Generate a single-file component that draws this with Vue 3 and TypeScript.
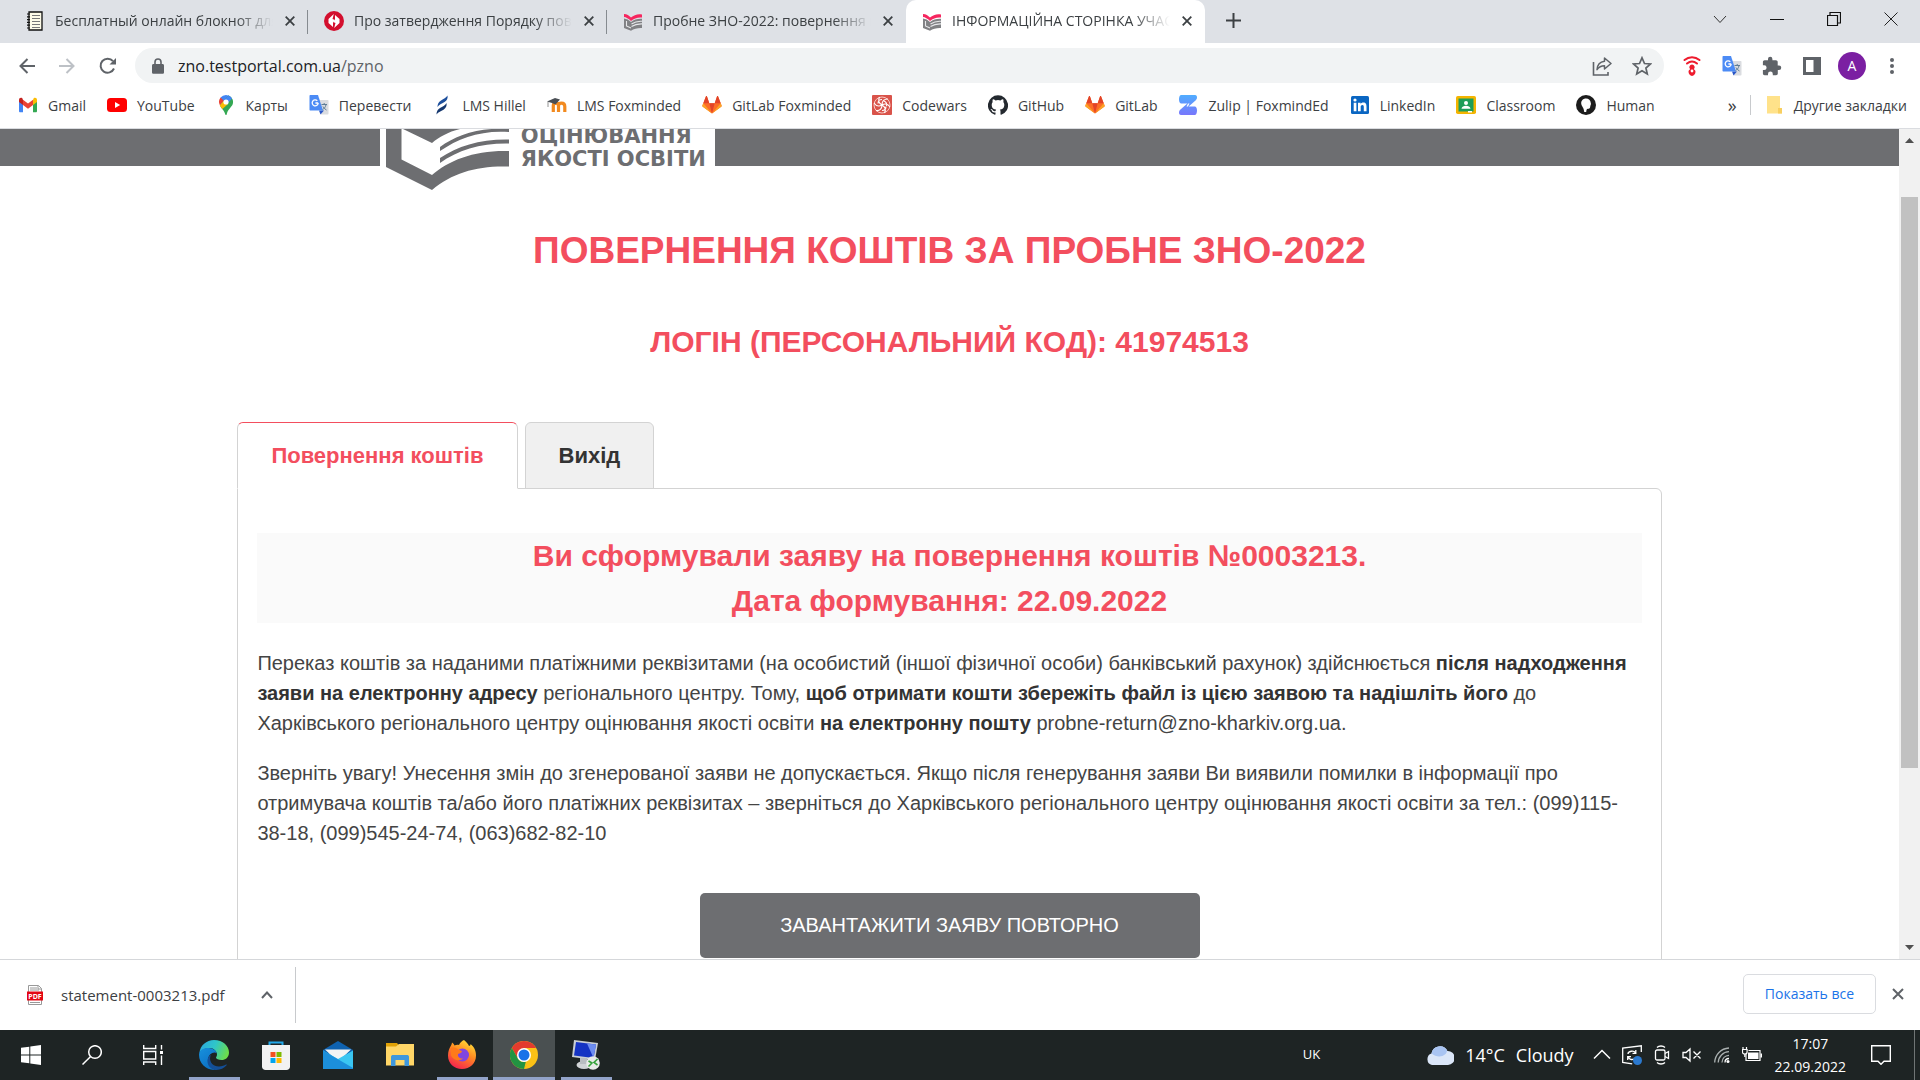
<script setup lang="ts">
interface Tab { title: string; icon: string; active?: boolean }
interface Bookmark { label: string; icon: string }
interface TaskItem { name: string; icon: string; size: number; running?: boolean; active?: boolean }

const tabs: Tab[] = [
  { title: 'Бесплатный онлайн блокнот для заметок', icon: 'notebook' },
  { title: 'Про затвердження Порядку повернення', icon: 'rada' },
  { title: 'Пробне ЗНО-2022: повернення коштів', icon: 'zno' },
  { title: 'ІНФОРМАЦІЙНА СТОРІНКА УЧАСНИКА', icon: 'zno', active: true },
]

const bookmarks: Bookmark[] = [
  { label: 'Gmail', icon: 'gmail' },
  { label: 'YouTube', icon: 'youtube' },
  { label: 'Карты', icon: 'maps' },
  { label: 'Перевести', icon: 'translate' },
  { label: 'LMS Hillel', icon: 'hillel' },
  { label: 'LMS Foxminded', icon: 'moodle' },
  { label: 'GitLab Foxminded', icon: 'gitlab' },
  { label: 'Codewars', icon: 'codewars' },
  { label: 'GitHub', icon: 'github' },
  { label: 'GitLab', icon: 'gitlab' },
  { label: 'Zulip | FoxmindEd', icon: 'zulip' },
  { label: 'LinkedIn', icon: 'linkedin' },
  { label: 'Classroom', icon: 'classroom' },
  { label: 'Human', icon: 'human' },
]

const extensions = [
  { name: 'VPN', icon: 'vpn' },
  { name: 'Google Переводчик', icon: 'translate' },
  { name: 'Расширения', icon: 'puzzle' },
  { name: 'Боковая панель', icon: 'panel' },
]

const taskItems: TaskItem[] = [
  { name: 'Пуск', icon: 'windows', size: 20 },
  { name: 'Поиск', icon: 'search', size: 20 },
  { name: 'Представление задач', icon: 'taskview', size: 20 },
  { name: 'Edge', icon: 'edge', size: 30, running: true },
  { name: 'Store', icon: 'store', size: 30 },
  { name: 'Почта', icon: 'mail', size: 30 },
  { name: 'Проводник', icon: 'explorer', size: 30 },
  { name: 'Firefox', icon: 'firefox', size: 30, running: true },
  { name: 'Chrome', icon: 'chrome', size: 28, running: true, active: true },
  { name: 'Удалённый рабочий стол', icon: 'remote', size: 30, running: true },
]

const tray = ['chevup', 'sync', 'meet', 'mute', 'wifi', 'battery']

// Inner markup of every 20x20 glyph (30x30 for the pinned applications).
const icons: Record<string, string> = {
  notebook:
    '<path d="M4 1h13v18H4z" fill="#fdfbe8" stroke="#111" stroke-width="1.3"/><path d="M7 4.500h8M7 7.500h8M7 10.500h8M7 13.500h8M7 16.500h8" stroke="#777" stroke-width="1"/><path d="M2 3h3M2 5.800h3M2 8.600h3M2 11.400h3M2 14.200h3M2 17h3" stroke="#111" stroke-width="1.200"/>',
  rada:
    '<circle cx="10" cy="10" r="10" fill="#d30f2e"/><path d="M9.800 3 4.500 8v4l4.500 4v-4.500l2-2.500-2.500-1z" fill="#fff"/><path d="M10.200 17 15.500 12V8L11 4v4.500L9 11l2.500 1z" fill="#fff"/>',
  zno:
    '<path d="M1 3c3 .2 5 1.600 7 3.500C11 4 15 2.500 19 3.500v3C15 6 11 7.300 8 10 5.500 7.500 3 6.200 1 6z" fill="#f6265f"/><path d="M1 7.500c2.500.3 5 1.500 7 3.500 3-2.500 7-3.500 11-3.200V17c-4-.2-8 .5-11 2.700L1 17z" fill="#808184"/><path d="M8.500 13c3-2 6.500-3 10.500-2.700M8.500 15.500c3-2 6.500-2.700 10.500-2.600M3.500 10v5l4.500 2" stroke="#e6e7e9" stroke-width="1.100" fill="none"/>',
  gmail:
    '<path d="M1 5.500V16c0 .8.500 1.300 1.200 1.300H5V9z" fill="#4285f4"/><path d="M15 9v8.300h2.800c.7 0 1.200-.5 1.200-1.300V5.500z" fill="#34a853"/><path d="M15 5v5l4-3V4.800c0-2-2-2.600-3.300-1.600z" fill="#fbbc04"/><path d="M5 10V4.800l5 3.800 5-3.800V10l-5 3.800z" fill="#ea4335"/><path d="M1 4.800V7l4 3V4.800l-.7-1.600C3 2.200 1 2.800 1 4.800z" fill="#c5221f"/>',
  youtube:
    '<rect y="3" width="20" height="14" rx="3.500" fill="#f00"/><path d="M8 7v6l5.200-3z" fill="#fff"/>',
  maps:
    '<path d="M10 0a7 7 0 0 1 5.700 3L8 11.500 4.600 2.500A7 7 0 0 1 10 0z" fill="#4285f4"/><path d="M4.600 2.500 8 6l-4 4.400a7 7 0 0 1 .6-7.900z" fill="#ea4335"/><path d="m3.900 10.400 8.500-9.900A7 7 0 0 1 16.400 10C14.500 13 11.500 15 10.700 19.500c-.2.700-1.200.7-1.400 0C8.600 15.500 5.300 13.500 3.900 10.400z" fill="#34a853"/><path d="m3.900 10.400 3.500-4.200L12 9l-5.600 5c-1-1.200-1.900-2.300-2.500-3.600z" fill="#fbbc04"/><path d="M12.400.5A7 7 0 0 1 16 3.400L12 8 8 5.500z" fill="#4285f4"/><circle cx="10" cy="7" r="2.600" fill="#fff"/>',
  translate:
    '<path d="M9 5h9.500c.6 0 1 .4 1 1v12.500c0 .6-.4 1-1 1H12z" fill="#dadce0"/><path d="m10 15.500 5 .0-3.500 4z" fill="#2a56c6"/><path d="M1.500 0H9l5 15.500H1.500c-.6 0-1-.4-1-1V1c0-.6.400-1 1-1z" fill="#4c8bf5"/><path d="M9.200 8H6.400M8.300 5.800A3 3 0 1 0 9.200 8" stroke="#fff" stroke-width="1.300" fill="none"/><path d="M12.500 9.500h5.500M15.200 8v1.500M17 9.800c-.5 2.200-2 4-3.500 5M14 11.500c.7 1.500 2 2.700 3.500 3.500" stroke="#5f7d95" stroke-width="1" fill="none"/>',
  hillel:
    '<path d="M15.500.5c.5 3-.5 5-3 6.500C9.500 8.800 7 9.500 5.500 12c0-3 1-4.800 3.500-6.500 2.800-1.800 5-2.500 6.500-5z" fill="#1d4f9c"/><path d="M14.500 8c.5 3-.5 5-3 6.700-2.500 1.500-5 2-7 4.800 0-3 1-4.800 3.500-6.500 2.500-1.500 5-2.500 6.500-5z" fill="#15386f"/>',
  moodle:
    '<path d="M5 17V10.500a2.500 2.500 0 0 1 2.500-2.300c1.800 0 2.700 1 2.700 2.800v6M10.200 11c0-1.800 1.200-2.800 3-2.800s3.300 1 3.300 3.300V17" transform="translate(1.300 0)" stroke="#f28a1f" stroke-width="3.200" fill="none"/><path d="M0 6.500 8 3l5 1.500-4.500 5L5 8z" fill="#4a4f55"/><path d="M1 6.800V12" stroke="#777" stroke-width=".8"/>',
  gitlab:
    '<path d="M10 18.500.8 11.800c-.4-.3-.6-.8-.4-1.300L4 1.200c.2-.4.800-.4.900 0l2.400 7h5.400l2.400-7c.1-.4.700-.4.900 0l3.600 9.300c.2.500 0 1-.4 1.300z" fill="#fc6d26"/><path d="m10 18.500 2.700-10.300H7.300z" fill="#e24329"/><path d="M10 18.500.8 11.800c-.4-.3-.6-.8-.4-1.300l.9-2.300z" fill="#fca326"/><path d="m10 18.500 9.200-6.700c.4-.3.600-.8.400-1.300l-.9-2.300z" fill="#fca326"/><path d="M1.300 8.200h6l-2.400-7c-.1-.4-.7-.4-.9 0zM18.700 8.200h-6l2.400-7c.1-.4.700-.4.900 0z" fill="#e24329"/>',
  codewars:
    '<rect width="20" height="20" rx="1" fill="#d9534a"/><circle cx="10" cy="10" r="8" fill="none" stroke="#f7c9c2" stroke-width="1"/><path d="M10 10c0-4 2-6 6-6M10 10c-3.500-2-4-5-2.500-8M10 10c-3.500 2-6 1-8-2M10 10c0 4-2.200 6-6 5.500M10 10c3.500 2 4 5 2.500 8M10 10c3.500-2 6-1 8 2M6 8.500c0-3 2-4 4-4M14 11.500c0 3-2 4-4 4M12 6c2.500 1 3 3 2.500 5" fill="none" stroke="#fff" stroke-width="1.100"/>',
  github:
    '<path d="M10 .3a10 10 0 0 0-3.200 19.500c.5.100.7-.2.700-.5v-1.900c-2.800.6-3.400-1.200-3.400-1.200-.4-1.200-1.100-1.500-1.100-1.500-.9-.6.100-.6.100-.6 1 .1 1.500 1 1.500 1 .9 1.600 2.400 1.100 3 .9.100-.7.300-1.100.6-1.400-2.200-.2-4.500-1.100-4.500-4.900 0-1.100.4-2 1-2.700-.1-.2-.4-1.200.1-2.600 0 0 .8-.3 2.700 1a9.400 9.400 0 0 1 5 0c1.900-1.300 2.700-1 2.700-1 .5 1.400.2 2.400.1 2.600.6.700 1 1.600 1 2.700 0 3.800-2.300 4.700-4.500 4.900.4.300.7.900.7 1.900v2.800c0 .3.200.6.700.5A10 10 0 0 0 10 .3z" fill="#24292f"/>',
  zulip:
    '<defs><linearGradient id="zu" x1="0" y1="0" x2="0" y2="1"><stop offset="0" stop-color="#50adff"/><stop offset="1" stop-color="#7877fc"/></linearGradient></defs><path d="M3 0h14c1.500 0 2 1 2 2.500 0 1-.5 2-1.200 2.700L9.500 12.500l2-4H3C1.500 8.500 1 6 1 4.500S1.500 0 3 0zM17 20H3c-1.500 0-2-1-2-2.500 0-1 .5-2 1.200-2.700l8.300-7.300-2 4H17c1.500 0 2 2.500 2 4S18.500 20 17 20z" fill="url(#zu)"/>',
  linkedin:
    '<rect x="1" y="1" width="18" height="18" rx="1.500" fill="#0a66c2"/><path d="M3.700 7.800h2.700v8.500H3.700zM8 7.800h2.600V9c.5-.8 1.400-1.400 2.700-1.400 2.700 0 3.200 1.800 3.200 4v4.700h-2.700v-4.200c0-1 0-2.200-1.400-2.200s-1.700 1-1.700 2.200v4.200H8z" fill="#fff"/><circle cx="5" cy="5" r="1.600" fill="#fff"/>',
  classroom:
    '<rect y="1" width="20" height="18" rx="1.800" fill="#f4b400"/><rect x="2.500" y="3.500" width="15" height="13" fill="#1e9d58"/><circle cx="10" cy="8" r="2" fill="#fff"/><path d="M5.500 13.800c0-2 2.500-3 4.500-3s4.500 1 4.500 3z" fill="#fff"/><path d="M12 16h4v1.500h-4z" fill="#fff"/>',
  human:
    '<circle cx="10" cy="10" r="10" fill="#1c1c1c"/><path d="M10 3.500c-3 0-5 2.300-4.800 5C5.500 11.500 8 12.500 8.200 17h2c.3-2 .2-3 1.800-3.300 2.500-.2 2-1.500 2.400-3 .3-1 .8-1.500.4-2.700C14.500 5 12.800 3.500 10 3.500z" fill="#fff"/>',
  folder:
    '<path d="M3 1h13v12h2v5.500H3z" fill="#ffe28a"/><path d="M14 13h4v5.500h-4z" fill="#f8cf60"/>',
  vpn:
    '<g fill="none" stroke="#ee1c2e" stroke-width="2" stroke-linecap="round"><path d="M2.500 4C7 .2 13 .2 17.500 4M5 7.500c3-2.500 7-2.500 10 0"/></g><path d="M10 8.500a2.700 2.700 0 0 1 1.800 4.700c1 .4 1.700 1.300 1.700 2.600 0 2-1.500 4.200-3.500 4.200s-3.500-2.200-3.500-4.200c0-1.300.7-2.200 1.700-2.600A2.700 2.700 0 0 1 10 8.500z" fill="#ee1c2e"/><circle cx="10" cy="15" r="1.400" fill="#fff"/>',
  puzzle:
    '<path d="M17 9.500h-1.300V6c0-1-.8-1.800-1.800-1.800h-3.500V3A2.200 2.200 0 0 0 6 3v1.200H2.600C1.700 4.200.9 5 .9 6v3.300h1.300a2.400 2.400 0 0 1 0 4.800H.9v3.400c0 1 .8 1.700 1.700 1.700H6V18a2.400 2.400 0 0 1 4.800 0v1.200h3.200c1 0 1.800-.8 1.800-1.700V14H17a2.200 2.200 0 0 0 0-4.500z" fill="#5f6368"/>',
  panel:
    '<path d="M1 1h18v18H1zM4 4v12h7.500V4z" fill="#5f6368" fill-rule="evenodd"/>',
  windows:
    '<path d="M0 2.800 8.300 1.700v7.800H0zM9.300 1.500 20 0v9.500H9.300zM0 10.500h8.300v7.800L0 17.200zM9.300 10.500H20V20L9.300 18.500z" fill="#fff"/>',
  search:
    '<g fill="none" stroke="#fff" stroke-width="1.500"><circle cx="13" cy="7" r="6.300"/><path d="M8.600 11.500.5 19.500"/></g>',
  taskview:
    '<g fill="none" stroke="#fff" stroke-width="1.400"><path d="M.7 0v3.500h12V0M.7 6.500h12v7.500H.7zM.7 20v-3h12v3M18.500 0v4.500M18.500 10.500V20"/></g><path d="M17 6h3v3h-3z" fill="#fff"/>',
  edge:
    '<defs><linearGradient id="eg" x1="0" y1=".2" x2="1" y2=".5"><stop offset="0" stop-color="#2ba8e0"/><stop offset=".5" stop-color="#2fc6c9"/><stop offset="1" stop-color="#6cdc4a"/></linearGradient><linearGradient id="eb" x1="0" y1="0" x2=".6" y2="1"><stop offset="0" stop-color="#1791dd"/><stop offset="1" stop-color="#0c6fc4"/></linearGradient></defs><path d="M.5 13C1 5.500 7.500 0 15 0c9 0 15 6 15 12.500 0 5-3.800 7.500-7.300 7.500-3.200 0-5.700-1-5.700-2.200 0-.8 1-1.300 1-3.300 0-3-3-6.500-7.500-6.500C5.500 8 1.800 10.500.5 13z" fill="url(#eg)"/><path d="M.1 14C.5 9.500 5.500 7.800 10 8c4 .2 7 2.500 7.700 5C14 11 8.500 15 9 20.500c.3 4 3 7.500 7 9.400C7 30.500-.5 23 .1 14z" fill="url(#eb)"/><path d="M12 15c-2.500 4 0 11.500 8 11.500 3 0 5.500-1.200 7-2 .6-.3 1 .2.600.8A15 15 0 0 1 16 30c-5-1-8-5.500-7.500-10 .3-2.500 1.700-4.200 3.500-5z" fill="#144f97"/>',
  store:
    '<path d="M8.500 7V2.500h13V7" fill="none" stroke="#22a7e8" stroke-width="2"/><path d="M1 5h28v21.500c0 2-1.500 3.500-3.500 3.500h-21C2.500 30 1 28.500 1 26.500z" fill="#f2f2f2"/><path d="M9.500 12h5v5h-5z" fill="#f25022"/><path d="M15.500 12h5v5h-5z" fill="#7fba00"/><path d="M9.500 18h5v5h-5z" fill="#00a4ef"/><path d="M15.500 18h5v5h-5z" fill="#ffb900"/>',
  mail:
    '<path d="M0 10 15 1l15 9v8H0z" fill="#0f62b0"/><path d="M2 9.500h26L17 20h-4z" fill="#f4f4f4"/><path d="M0 10.500 15 19 30 10.500V29H0z" fill="#3ac6f2"/><path d="M0 10.500 30 28v1H0z" fill="#1c8fdb"/>',
  explorer:
    '<path d="M1 3h11l2 2.500V8H1z" fill="#e0a106"/><path d="M1 6.500h10L14 4h15v21.500H1z" fill="#ffd667"/><path d="M6 26V17c0-1.500 1-2 2-2h14c1 0 2 .5 2 2v9h-4.500v-6h-9v6z" fill="#3f97dc"/>',
  firefox:
    '<defs><linearGradient id="ff" x1=".8" y1="0" x2=".3" y2="1"><stop offset="0" stop-color="#ffe43a"/><stop offset=".45" stop-color="#ff8a22"/><stop offset="1" stop-color="#f5214f"/></linearGradient></defs><path d="M17 0c3 2.500 4 4 5 6 2-.5 1.500-2 1.500-2C27.500 7 29 11 29 15.500 29 23.500 23 29 15 29S1 23.500 1 15.500C1 11 2.500 8 4 5.500c.5-1 1-2 1-3 1.500 1 2 2 2.500 3 1.500-.7 3-.8 4.500-.5 1-2.500 3-4 5-5z" fill="url(#ff)"/><circle cx="15.500" cy="15" r="6.500" fill="#8046e0"/><path d="M4 8c3-1 6 0 7.500 2 1.500 0 3 .5 3.500 1.500-1 2-3 2-4 2.500-.5 3 2 5 5 4.500-3 3-10 2-12-3z" fill="#ff7a1a"/>',
  chrome:
    '<circle cx="15" cy="15" r="15" fill="#fbc116"/><path d="M15 0a15 15 0 0 1 13 7.500H15L8.500 18.700 2 7.500A15 15 0 0 1 15 0z" fill="#e33b2e"/><path d="M2 7.500 8.500 18.700a7.500 7.500 0 0 0 6.500 3.800h3.500L15 30A15 15 0 0 1 2 7.500z" fill="#229342"/><path d="m21.500 18.700-6.500 11.300L17 22z" fill="#fbc116"/><circle cx="15" cy="15" r="7.500" fill="#fff"/><circle cx="15" cy="15" r="5.900" fill="#1a73e8"/>',
  remote:
    '<path d="M3 0 27 3 24 20 1 17z" fill="#c9ced4"/><path d="M5 2 25 4.500 22.500 18 3 15.500z" fill="#1533c4"/><path d="M16 3.400l9 1.100L22.500 18z" fill="#6d8df0"/><ellipse cx="13" cy="25" rx="7.500" ry="4" fill="#d0d3d6"/><path d="M9 18h7v6H9z" fill="#b9bdc2"/><circle cx="22" cy="23" r="6.800" fill="#e8ebe8"/><path d="m17.500 21 3.500 2-3.500 3.500M26.500 19l-3.500 3.500 3.500 2.500" fill="none" stroke="#37a33c" stroke-width="1.600"/>',
  chevup: '<path d="m2 13.500 8-8 8 8" fill="none" stroke="#fff" stroke-width="1.500"/>',
  sync:
    '<path d="M19.300 7V.8L.7 3v14.500l9.500 1.300" fill="none" stroke="#fff" stroke-width="1.300"/><path d="M6 9c0-3 6-4 7.500-1M13.800 5v3.300h-3.300M12 14c-2 1-5 .5-5.500-2M5.700 15v-3.300H9" fill="none" stroke="#fff" stroke-width="1.300"/><circle cx="15.500" cy="15.500" r="4.500" fill="#2b79cf"/>',
  meet:
    '<g fill="none" stroke="#fff" stroke-width="1.300"><rect x="3.500" y="5" width="9.500" height="10" rx="1.500"/><path d="m13 8.500 3.500-2v7l-3.500-2M5 2.500c2-2 6-2 8 0M5 17.500c2 2 6 2 8 0"/></g>',
  mute:
    '<path d="M1 7.500h3L8 4v12l-4-3.500H1zM11.500 6.500l7 7M18.500 6.500l-7 7" fill="none" stroke="#fff" stroke-width="1.300"/>',
  wifi:
    '<g fill="none" stroke="#aab0b0" stroke-width="1.300"><path d="M2.700 17.500C3 9.500 9 3.500 17 3M6.200 17.500C6.500 11.500 11 7 17 6.700M10 17.500c.2-4 3-7 7-7.200"/></g><path d="M13 17.500c0-2.500 1.500-4 4-4" fill="none" stroke="#fff" stroke-width="1.300"/><circle cx="16" cy="16.500" r="1.500" fill="#fff"/>',
  battery:
    '<path d="M4 9v6.500h14V5.500H6.500" fill="none" stroke="#fff" stroke-width="1.200"/><path d="M6 7.500h10.500V14H6zM18.500 8.500H20v4h-1.500z" fill="#fff"/><path d="M1 2v2.500M4.500 2v2.500M.5 4.500h4.600V7c0 1.500-1 2-2.300 2S.5 8.500.5 7zM2.800 9v3" fill="none" stroke="#fff" stroke-width="1.200"/>',
}
</script>

<template>
  <div class="desktop">
    <section class="browser">
      <div class="tabstrip">
        <div v-for="(t, i) in tabs" :key="i" class="tab" :class="{ active: t.active, divided: i < 2 }">
          <svg class="ico" viewBox="0 0 20 20" v-html="icons[t.icon]"></svg>
          <span class="tab-title">{{ t.title }}</span>
          <button class="bare close" aria-label="Закрыть вкладку">
            <svg width="10" height="10" viewBox="0 0 10 10"><path d="M.7.7l8.600 8.600M9.300.7.7 9.300" stroke="#3c4043" stroke-width="1.800" /></svg>
          </button>
        </div>
        <button class="bare newtab" aria-label="Новая вкладка">
          <svg width="15" height="15" viewBox="0 0 15 15"><path d="M7.500 0v15M0 7.500h15" stroke="#3c4043" stroke-width="2" /></svg>
        </button>
        <div class="winctl">
          <button class="bare" aria-label="Поиск вкладок"><svg width="14" height="14" viewBox="0 0 14 14"><path d="m1 4 6 6.500L13 4" fill="none" stroke="#333" /></svg></button>
          <button class="bare" aria-label="Свернуть"><svg width="14" height="14" viewBox="0 0 14 14"><path d="M0 7.500h14" stroke="#111" /></svg></button>
          <button class="bare" aria-label="Свернуть в окно"><svg width="14" height="14" viewBox="0 0 14 14"><path d="M.5 3.500h10v10H.5zM3 3V.5h10.500V11H11" fill="none" stroke="#111" stroke-width="1.200" /></svg></button>
          <button class="bare" aria-label="Закрыть"><svg width="14" height="14" viewBox="0 0 14 14"><path d="m.5.500 13 13M13.500.500l-13 13" stroke="#222" /></svg></button>
        </div>
      </div>

      <div class="toolbar">
        <div class="nav">
          <button class="bare" aria-label="Назад"><svg width="16" height="16" viewBox="0 0 16 16"><path d="M16 8H1.500M8.500 1l-7 7 7 7" fill="none" stroke="#5f6368" stroke-width="2" /></svg></button>
          <button class="bare" aria-label="Вперёд"><svg width="16" height="16" viewBox="0 0 16 16"><path d="M0 8h14.500M7.500 1l7 7-7 7" fill="none" stroke="#bdc1c6" stroke-width="2" /></svg></button>
          <button class="bare" aria-label="Обновить"><svg width="18" height="18" viewBox="0 0 18 18"><path d="M15 11.500A7 7 0 1 1 14 4.200" fill="none" stroke="#5f6368" stroke-width="2" /><path d="M17 1v6.500h-6.500z" fill="#5f6368" /></svg></button>
        </div>
        <div class="omnibox">
          <svg width="12" height="16" viewBox="0 0 12 16"><path d="M1.500 6h9c.8 0 1.500.6 1.500 1.400v7c0 .8-.7 1.400-1.500 1.400h-9c-.8 0-1.500-.6-1.500-1.400v-7C0 6.600.7 6 1.500 6z" fill="#5f6368" /><path d="M3 6.500V4a3 3 0 0 1 6 0v2.500" fill="none" stroke="#5f6368" stroke-width="1.600" /></svg>
          <span class="url">zno.testportal.com.ua<span class="path">/pzno</span></span>
          <button class="bare cell" aria-label="Поделиться"><svg width="20" height="20" viewBox="0 0 20 20"><path d="M1.500 6v13h14.500v-3" fill="none" stroke="#5f6368" stroke-width="1.600" /><path d="M12.500 2 19 7.500 12.500 13v-3.300c-3.500 0-5.500 1-7.500 4 .3-4.500 3-8 7.500-8.500z" fill="none" stroke="#5f6368" stroke-width="1.500" stroke-linejoin="round" /></svg></button>
          <button class="bare cell" aria-label="Добавить в закладки"><svg width="20" height="20" viewBox="0 0 20 20"><path d="m10 1.800 2.500 5.700 6 .5-4.600 4 1.400 6-5.300-3.200L4.700 18l1.400-6-4.600-4 6-.5z" fill="none" stroke="#5f6368" stroke-width="1.700" /></svg></button>
        </div>
        <div class="exts">
          <button v-for="e in extensions" :key="e.icon" class="bare cell" :aria-label="e.name">
            <svg class="ico" viewBox="0 0 20 20" v-html="icons[e.icon]"></svg>
          </button>
          <button class="bare cell"><span class="avatar">A</span></button>
          <button class="bare cell" aria-label="Меню"><svg width="4" height="18" viewBox="0 0 4 18"><g fill="#5f6368"><circle cx="2" cy="3" r="2" /><circle cx="2" cy="9" r="2" /><circle cx="2" cy="15" r="2" /></g></svg></button>
        </div>
      </div>

      <nav class="bookmarks">
        <div class="marks">
          <a v-for="(b, i) in bookmarks" :key="i" href="#" class="mark">
            <svg class="ico" viewBox="0 0 20 20" v-html="icons[b.icon]"></svg>{{ b.label }}
          </a>
        </div>
        <button class="bare more" aria-label="Другие">»</button>
        <a href="#" class="mark other"><svg class="ico" viewBox="0 0 20 20" v-html="icons.folder"></svg>Другие закладки</a>
      </nav>

      <div class="viewport">
        <main class="page">
          <header class="band">
            <a href="#" class="brand">
              <svg width="123" height="61" viewBox="0 0 123 61" fill="#6d6e71">
                <path d="M0 0h15.500v30.500L46 46c17-15 43-25 77-24v15.500c-32-1-56 6-77 23.500L0 38z" />
                <path d="M17 0h57C62 3 53 8 46 14z" />
                <path d="M54 18C70 6 94-2 123 0v3C95 1 73 9 54 22zM54 29c18-12 40-19 69-18.500v4C95 14 72 21 54 34z" />
              </svg>
              <span class="brand-name">ОЦІНЮВАННЯ<br />ЯКОСТІ ОСВІТИ</span>
            </a>
          </header>
          <h1>ПОВЕРНЕННЯ КОШТІВ ЗА ПРОБНЕ ЗНО-2022</h1>
          <h2>ЛОГІН (ПЕРСОНАЛЬНИЙ КОД): 41974513</h2>
          <div class="account">
            <div class="account-tabs">
              <a href="#" class="account-tab current">Повернення коштів</a>
              <a href="#" class="account-tab">Вихід</a>
            </div>
            <section class="panel">
              <h3>Ви сформували заяву на повернення коштів №0003213.<br />Дата формування: 22.09.2022</h3>
              <p>Переказ коштів за наданими платіжними реквізитами (на особистий (іншої фізичної особи) банківський рахунок) здійснюється <b>після надходження заяви на електронну адресу</b> регіонального центру. Тому, <b>щоб отримати кошти збережіть файл із цією заявою та надішліть його</b> до Харківського регіонального центру оцінювання якості освіти <b>на електронну пошту</b> probne-return@zno-kharkiv.org.ua.</p>
              <p>Зверніть увагу! Унесення змін до згенерованої заяви не допускається. Якщо після генерування заяви Ви виявили помилки в інформації про отримувача коштів та/або його платіжних реквізитах – зверніться до Харківського регіонального центру оцінювання якості освіти за тел.: (099)115-38-18, (099)545-24-74, (063)682-82-10</p>
              <button class="download">ЗАВАНТАЖИТИ ЗАЯВУ ПОВТОРНО</button>
            </section>
          </div>
        </main>
        <div class="scrollbar">
          <svg width="21" height="21" viewBox="0 0 21 21"><path d="M6 14h9l-4.500-5z" fill="#505050" /></svg>
          <div class="track"><div class="thumb"></div></div>
          <svg width="21" height="21" viewBox="0 0 21 21"><path d="M6 7h9l-4.500 5z" fill="#505050" /></svg>
        </div>
      </div>

      <div class="shelf">
        <button class="bare file">
          <svg width="16" height="20" viewBox="0 0 16 20"><path d="M1.500.500h10l3 3v16h-13z" fill="#fff" stroke="#999" /><path d="M3 3h7M3 5h9M11 .500V4h3.500M3 17.500h10" fill="none" stroke="#999" /><path d="M0 6.500h16v9H0z" fill="#e30613" /><text x="8" y="13.500" text-anchor="middle" font-size="7" font-weight="700" font-family="Open Sans, sans-serif" fill="#fff">PDF</text></svg>
          statement-0003213.pdf
        </button>
        <button class="bare chev" aria-label="Действия"><svg width="12" height="8" viewBox="0 0 12 8"><path d="m1 7 5-5.500L11 7" fill="none" stroke="#5f6368" stroke-width="2" /></svg></button>
        <span class="rule"></span>
        <button class="showall">Показать все</button>
        <button class="bare hide" aria-label="Закрыть"><svg width="12" height="12" viewBox="0 0 12 12"><path d="m1 1 10 10M11 1 1 11" stroke="#5f6368" stroke-width="2" /></svg></button>
      </div>
    </section>

    <footer class="taskbar">
      <button v-for="t in taskItems" :key="t.icon" class="bare task" :class="{ running: t.running, front: t.active }" :aria-label="t.name">
        <svg :width="t.size" :height="t.size" :viewBox="t.size > 20 ? '0 0 30 30' : '0 0 20 20'" v-html="icons[t.icon]"></svg>
      </button>
      <div class="status">
        <span class="lang">UK</span>
        <button class="bare weather">
          <svg width="28" height="22" viewBox="0 0 28 22"><path d="M6 21a6 6 0 0 1-.5-11.500A8.500 8.500 0 0 1 21.500 7 7 7 0 0 1 22 21z" fill="#dbe6f8" /><path d="M5.500 9.500A8.500 8.500 0 0 1 21 6c.5 6-9 9-15.500 3.500z" fill="#a9c4f2" /></svg>
          <span>14°C</span><span>Cloudy</span>
        </button>
        <div class="tray">
          <svg v-for="n in tray" :key="n" class="ico" viewBox="0 0 20 20" v-html="icons[n]"></svg>
        </div>
        <time class="clock">17:07<br />22.09.2022</time>
        <button class="bare notes" aria-label="Уведомления"><svg width="20" height="20" viewBox="0 0 20 20"><path d="M.700.700h18.600v15.600H13l-3 3-3-3H.700z" fill="none" stroke="#fff" stroke-width="1.400" /></svg></button>
        <span class="peek"></span>
      </div>
    </footer>
  </div>
</template>

<style>
body { margin: 0; }
</style>

<style scoped>
.desktop {
  display: flex;
  flex-direction: column;
  height: 100vh;
  overflow: hidden;
  font-family: "Open Sans", "Noto Sans", sans-serif;
  font-size: 14px;
  color: #3c4043;
}
.browser { flex: 1; min-height: 0; display: flex; flex-direction: column; background: #fff; }
svg { flex: none; display: block; }
.ico { width: 20px; height: 20px; }
.bare {
  display: flex;
  align-items: center;
  justify-content: center;
  border: 0;
  padding: 0;
  background: none;
  font: inherit;
  color: inherit;
}
a { color: inherit; text-decoration: none; }

.tabstrip { display: flex; height: 43px; padding-left: 9px; background: #dee1e6; }
.tab { display: flex; align-items: center; gap: 10px; flex: 0 1 299px; min-width: 0; box-sizing: border-box; padding: 0 13px 2px 16px; }
.tab.divided { background: linear-gradient(#868b90, #868b90) right center / 1px 24px no-repeat; }
.tab.active { background: #fff; border-radius: 10px 10px 0 0; }
.tab-title { flex: 1; min-width: 0; overflow: hidden; white-space: nowrap; mask-image: linear-gradient(to right, #000 82%, transparent 99%); }
.newtab { width: 56px; padding-bottom: 2px; }
.winctl { display: flex; height: 37px; margin-left: auto; padding-right: 1px; }
.winctl .bare { width: 57px; }

.toolbar { display: flex; align-items: center; height: 45px; padding: 0 8px 0 19px; }
.nav { display: flex; align-items: center; gap: 24px; padding-right: 18px; }
.omnibox { display: flex; align-items: center; flex: 1; height: 35px; border-radius: 18px; background: #f1f3f4; padding: 0 2px 0 17px; }
.url { flex: 1; padding-left: 14px; font-size: 16px; color: #202124; }
.path { color: #5f6368; }
.cell { width: 40px; height: 35px; }
.exts { display: flex; padding-left: 8px; }
.avatar { width: 28px; height: 28px; border-radius: 50%; background: #7b1fa2; color: #fff; line-height: 28px; text-align: center; }

.bookmarks { display: flex; align-items: center; height: 34px; padding: 0 13px 6px 18px; border-bottom: 1px solid #dadce0; }
.marks { display: flex; gap: 21px; flex: 1; min-width: 0; overflow: hidden; }
.mark { display: flex; align-items: center; gap: 10px; white-space: nowrap; }
.more { padding: 0 13px; font-size: 18px; }
.other { border-left: 1px solid #c8cacd; padding-left: 13px; }

.viewport { flex: 1; min-height: 0; display: flex; overflow: hidden; }
.page { flex: 1; min-width: 0; font-family: "Liberation Sans", Arial, sans-serif; color: #444; }
.band { height: 37px; background: #6d6e71; padding-left: 20%; }
.brand { display: inline-flex; gap: 12px; padding: 0 9px 0 6px; background: #fff; color: #6d6e71; }
.brand-name { margin-top: -4px; font: 700 21px/23px "DejaVu Sans", sans-serif; }
h1, h2, h3 { margin: 0; text-align: center; font-weight: 700; color: #f34e5e; }
h1 { margin-top: 59px; font-size: 37px; line-height: 52px; }
h2 { margin-top: 45px; font-size: 30px; line-height: 40px; }
h3 { margin-bottom: 25px; font-size: 30px; line-height: 45px; background: #fafafa; }
.account { width: 75%; margin: 60px auto 0; }
.account-tabs { display: flex; gap: 7px; }
.account-tab {
  margin-bottom: -1px;
  padding: 0 33px;
  border: 1px solid #d3d3d3;
  border-radius: 6px 6px 0 0;
  background: #f0f0f0;
  font-size: 22px;
  font-weight: 700;
  line-height: 65px;
  color: #333;
}
.current { z-index: 1; border-top-color: #f34e5e; border-bottom-color: #fff; background: #fff; color: #f34e5e; }
.panel { padding: 44px 19px; border: 1px solid #d3d3d3; border-radius: 0 6px 6px 6px; }
.panel p { margin: 0 0 20px; font-size: 20px; line-height: 30px; }
.panel b { color: #333; }
.download {
  display: block;
  width: 500px;
  height: 65px;
  margin: 45px auto 0;
  border: 0;
  border-radius: 5px;
  background: #6d6e71;
  color: #fff;
  font: 20px "Liberation Sans", Arial, sans-serif;
}
.scrollbar { display: flex; flex-direction: column; width: 21px; background: #f1f1f1; }
.track { flex: 1; padding: 47px 2px 0; }
.thumb { height: 77%; background: #c1c1c1; }

.shelf { display: flex; align-items: center; height: 70px; padding: 0 16px 0 27px; border-top: 1px solid #d5d7da; }
.file { gap: 18px; font-size: 15px; }
.chev { width: 70px; padding-left: 14px; }
.rule { height: 56px; border-left: 1px solid #c8cacd; }
.showall { margin: 0 0 3px auto; width: 133px; height: 40px; border: 1px solid #dadce0; border-radius: 5px; background: #fff; color: #1a73e8; font: inherit; font-weight: 500; }
.hide { padding: 0 0 2px 16px; }

.taskbar { display: flex; height: 50px; background: #1e2424; color: #fff; }
.task { width: 62px; border-bottom: 3px solid transparent; padding-top: 3px; box-sizing: border-box; background-clip: padding-box; }
.task:nth-child(-n+3) { width: 61px; }
.task.running { background: linear-gradient(#92a3c9, #92a3c9) center bottom / 51px 3px no-repeat border-box; }
.task.front { background: linear-gradient(#92a3c9, #92a3c9) center bottom / 100% 3px no-repeat border-box, #4a5051; }
.status { display: flex; align-items: center; margin-left: auto; }
.lang { margin-right: 106px; padding-bottom: 3px; font-size: 13px; }
.weather { gap: 11px; font-size: 18px; }
.tray { display: flex; gap: 10px; padding: 0 13px 0 18px; }
.clock { font-size: 14px; line-height: 23px; text-align: center; }
.notes { width: 68px; height: 50px; padding-left: 2px; }
.peek { width: 5px; height: 50px; border-left: 1px solid #6f7474; }
</style>
